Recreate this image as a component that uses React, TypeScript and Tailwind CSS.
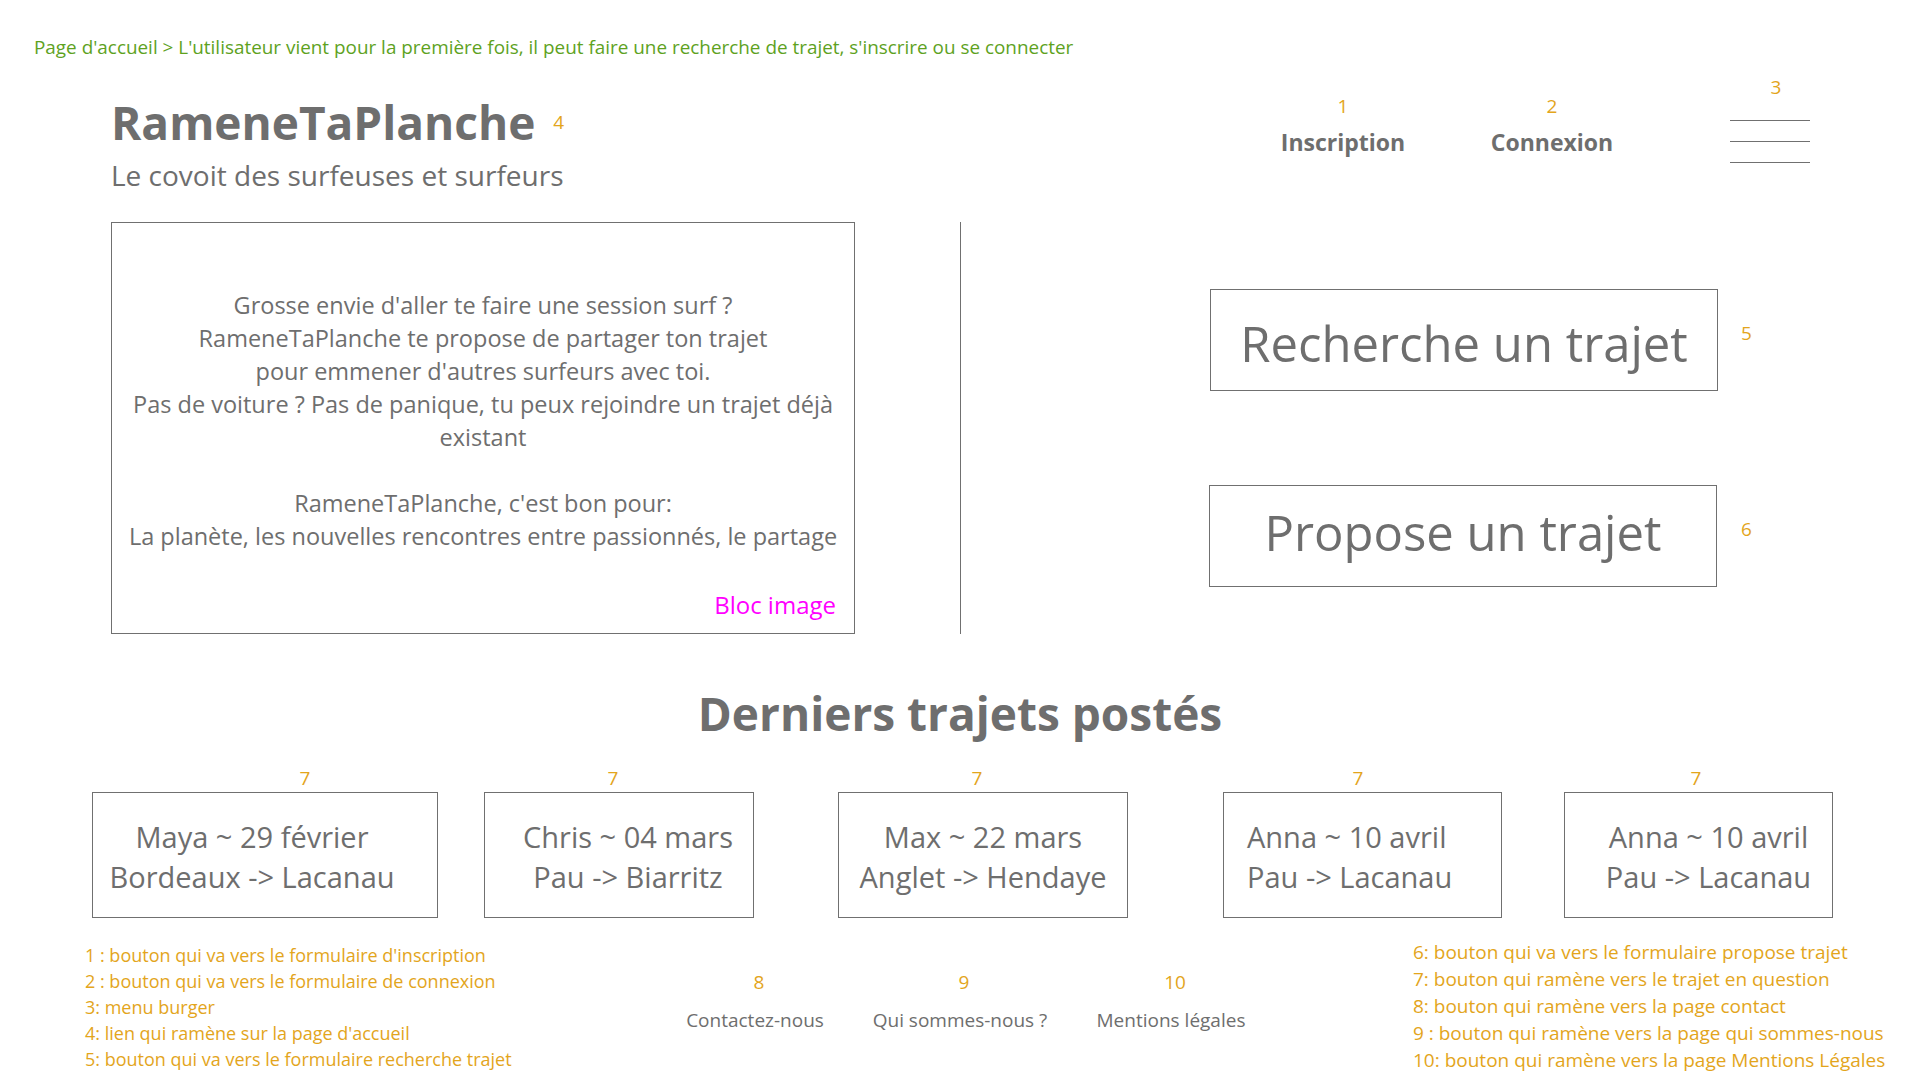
import React from "react";

const trips = [
  { who: "Maya ~ 29 février", route: "Bordeaux -> Lacanau", ml: "ml-[92px]", w: "w-[346px]", label: "pl-[80px]", body: "items-center pr-[26px]" },
  { who: "Chris ~ 04 mars", route: "Pau -> Biarritz", ml: "ml-[46px]", w: "w-[270px]", label: "pr-[12px]", body: "items-center pl-[18px]" },
  { who: "Max ~ 22 mars", route: "Anglet -> Hendaye", ml: "ml-[84px]", w: "w-[290px]", label: "pr-[12px]", body: "items-center" },
  { who: "Anna ~ 10 avril", route: "Pau -> Lacanau", ml: "ml-[95px]", w: "w-[279px]", label: "pr-[9px]", body: "items-start pl-[23px]" },
  { who: "Anna ~ 10 avril", route: "Pau -> Lacanau", ml: "ml-[62px]", w: "w-[269px]", label: "pr-[5px]", body: "items-center pl-[20px]" },
];

const leftNotes = [
  "1 : bouton qui va vers le formulaire d'inscription",
  "2 : bouton qui va vers le formulaire de connexion",
  "3: menu burger",
  "4: lien qui ramène sur la page d'accueil",
  "5: bouton qui va vers le formulaire recherche trajet",
];

const rightNotes = [
  "6: bouton qui va vers le formulaire propose trajet",
  "7: bouton qui ramène vers le trajet en question",
  "8: bouton qui ramène vers la page contact",
  "9 : bouton qui ramène vers la page qui sommes-nous",
  "10: bouton qui ramène vers la page Mentions Légales",
];

const links = [
  { n: "8", text: "Contactez-nous", ml: "" },
  { n: "9", text: "Qui sommes-nous ?", ml: "ml-[25px]" },
  { n: "10", text: "Mentions légales", ml: "ml-[31px]" },
];

function Num({ children, className = "" }: { children: React.ReactNode; className?: string }) {
  return <div className={"text-[19px] leading-[24px] text-[#e3a51c] " + className}>{children}</div>;
}

export default function App() {
  return (
    <div className="w-[1920px] h-[1080px] overflow-hidden bg-white font-['Open_Sans',sans-serif] text-[#6e6e6e]">
      {/* breadcrumb */}
      <div className="pt-[34px] pl-[34px] text-[18.9px] leading-[26px] text-[#5ea21e] whitespace-nowrap">
        Page d'accueil &gt; L'utilisateur vient pour la première fois, il peut faire une recherche de trajet, s'inscrire ou se connecter
      </div>

      {/* header */}
      <div className="flex items-start">
        <div className="pl-[111px] pt-[31px]">
          <div className="flex items-start">
            <h1 className="text-[46px] leading-[62px] font-bold">RameneTaPlanche</h1>
            <Num className="ml-[18px] mt-[19px]">4</Num>
          </div>
          <div className="mt-[2px] text-[28px] leading-[40px]">Le covoit des surfeuses et surfeurs</div>
        </div>
        <nav className="ml-auto mr-[110px] flex items-start">
          <div className="w-[160px] pt-[34px] flex flex-col items-center">
            <Num>1</Num>
            <div className="mt-[8px] text-[23px] leading-[32px] font-bold">Inscription</div>
          </div>
          <div className="ml-[49px] w-[160px] pt-[34px] flex flex-col items-center">
            <Num>2</Num>
            <div className="mt-[8px] text-[23px] leading-[32px] font-bold">Connexion</div>
          </div>
          <div className="ml-[98px] w-[80px] pt-[15px] flex flex-col items-center">
            <Num className="pl-[12px]">3</Num>
            <div className="mt-[21px] flex flex-col gap-[20px] w-[80px]">
              <span className="h-px bg-[#707070]" />
              <span className="h-px bg-[#707070]" />
              <span className="h-px bg-[#707070]" />
            </div>
          </div>
        </nav>
      </div>

      {/* main */}
      <div className="mt-[27px] flex items-start pl-[111px]">
        <div className="w-[744px] h-[412px] border border-[#707070] flex flex-col pt-[66px]">
          <div className="text-[23.5px] leading-[33px] text-center whitespace-nowrap">
            <div>Grosse envie d'aller te faire une session surf ?</div>
            <div>RameneTaPlanche te propose de partager ton trajet</div>
            <div>pour emmener d'autres surfeurs avec toi.</div>
            <div>Pas de voiture ? Pas de panique, tu peux rejoindre un trajet déjà</div>
            <div>existant</div>
            <div>&nbsp;</div>
            <div>RameneTaPlanche, c'est bon pour:</div>
            <div>La planète, les nouvelles rencontres entre passionnés, le partage</div>
          </div>
          <div className="mt-[35px] pr-[18px] text-right text-[24px] leading-[34px] text-[#ff00ff]">Bloc image</div>
        </div>
        <div className="ml-[105px] w-px h-[412px] bg-[#707070]" />
        <div className="ml-[249px] flex flex-col">
          <div className="mt-[67px] flex items-center">
            <button className="w-[508px] h-[102px] pt-[5px] border border-[#707070] text-[49px] leading-[60px] text-[#6e6e6e]">
              Recherche un trajet
            </button>
            <Num className="ml-[23px] -mt-[14px]">5</Num>
          </div>
          <div className="mt-[94px] -ml-px flex items-center">
            <button className="w-[508px] h-[102px] pb-[8px] border border-[#707070] text-[49px] leading-[60px] text-[#6e6e6e]">
              Propose un trajet
            </button>
            <Num className="ml-[24px] -mt-[14px]">6</Num>
          </div>
        </div>
      </div>

      {/* latest trips */}
      <h2 className="mt-[51px] text-center text-[46px] leading-[56px] font-bold">Derniers trajets postés</h2>
      <div className="mt-[25px] flex items-start">
        {trips.map((t, i) => (
          <div key={i} className={"flex flex-col " + t.ml + " " + t.w}>
            <Num className={"text-center " + t.label}>7</Num>
            <div className={"mt-[2px] h-[126px] pt-[4px] border border-[#707070] flex flex-col justify-center text-[29px] leading-[40px] whitespace-nowrap " + t.body}>
              <div>{t.who}</div>
              <div>{t.route}</div>
            </div>
          </div>
        ))}
      </div>

      {/* footer */}
      <footer className="mt-[24px] flex items-start">
        <div className="pl-[85px] w-[665px] text-[18px] leading-[26px] text-[#e3a51c] whitespace-nowrap">
          {leftNotes.map((n) => (
            <div key={n}>{n}</div>
          ))}
        </div>
        <div className="flex items-start pt-[28px]">
          {links.map((l) => (
            <div key={l.n} className={"w-[180px] flex flex-col items-center " + l.ml}>
              <Num className="pl-[8px]">{l.n}</Num>
              <div className="mt-[13px] text-[19px] leading-[26px] whitespace-nowrap">{l.text}</div>
            </div>
          ))}
        </div>
        <div className="ml-[152px] -mt-[3px] text-[19px] leading-[27px] text-[#e3a51c] whitespace-nowrap">
          {rightNotes.map((n) => (
            <div key={n}>{n}</div>
          ))}
        </div>
      </footer>
    </div>
  );
}
